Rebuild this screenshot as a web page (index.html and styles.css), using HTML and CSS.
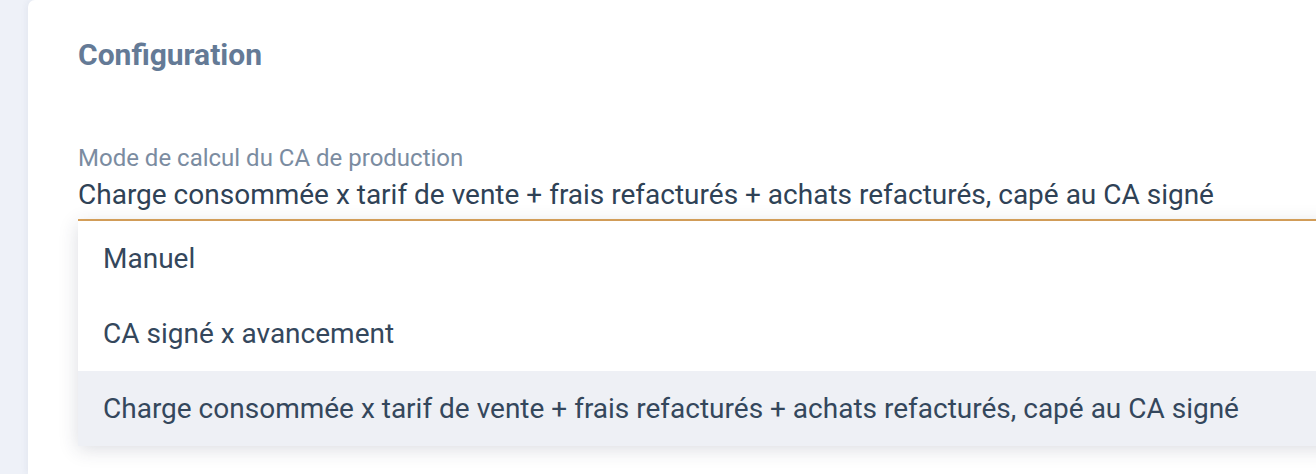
FILE: index.html
```html
<!DOCTYPE html>
<html lang="fr">
<head>
<meta charset="utf-8">
<title>Configuration</title>
<link rel="stylesheet" href="styles.css">
</head>
<body>
<div class="page">
  <section class="card">
    <h2 class="card-title">Configuration</h2>
    <div class="field">
      <div class="field-label">Mode de calcul du CA de production</div>
      <div class="field-value">Charge consommée x tarif de vente + frais refacturés + achats refacturés, capé au CA signé</div>
      <ul class="menu">
        <li class="menu-item">Manuel</li>
        <li class="menu-item">CA signé x avancement</li>
        <li class="menu-item is-active">Charge consommée x tarif de vente + frais refacturés + achats refacturés, capé au CA signé</li>
      </ul>
    </div>
  </section>
</div>
</body>
</html>
```

FILE: styles.css
```css
* { box-sizing: border-box; }
html, body { margin: 0; padding: 0; }
body {
  background: #eef1f8;
  font-family: Roboto, "Liberation Sans", Arial, sans-serif;
  overflow: hidden;
  width: 1316px;
  height: 474px;
}
.page {
  padding-left: 28px;
  height: 474px;
  overflow: hidden;
}
.card {
  background: #ffffff;
  border-radius: 7px 0 0 0;
  height: 474px;
  padding: 37px 0 0 50px;
  box-shadow: -2px 0 6px rgba(40, 60, 100, 0.05);
}
.card-title {
  margin: 0;
  font-size: 30px;
  font-weight: 700;
  color: #647a96;
  line-height: 36px;
}
.field {
  position: relative;
  margin-top: 71px;
  margin-right: -40px;
}
.field-label {
  font-size: 24px;
  line-height: 28px;
  color: #7b8ca1;
}
.field-value {
  font-size: 28px;
  line-height: 32px;
  color: #2f4256;
  padding: 7px 0 8px 0;
  border-bottom: 2px solid #dca45a;
}
.menu {
  position: absolute;
  left: 0;
  right: 0;
  top: 100%;
  margin: 0;
  padding: 0;
  list-style: none;
  background: #ffffff;
  box-shadow: 0 3px 18px rgba(40, 50, 80, 0.17);
  z-index: 2;
}
.menu-item {
  height: 75px;
  display: flex;
  align-items: center;
  padding-left: 25px;
  font-size: 28px;
  color: #34475c;
  white-space: nowrap;
}
.menu-item.is-active {
  background: #eef0f5;
}
```
